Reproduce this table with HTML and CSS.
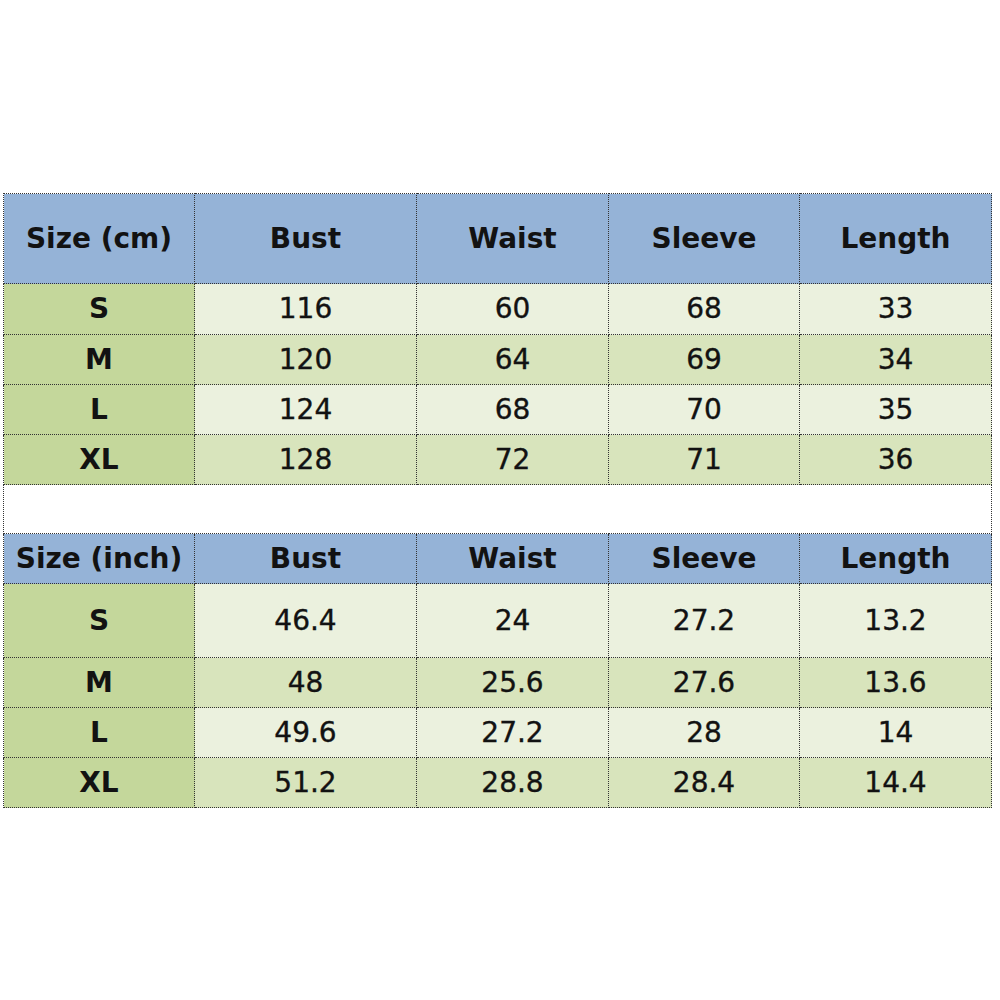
FILE: index.html
```html
<!DOCTYPE html>
<html>
<head>
<meta charset="utf-8">
<link rel="stylesheet" href="styles.css">
</head>
<body>
<div class="page">
<table class="chart">
  <colgroup>
    <col class="c1"><col class="c2"><col class="c3"><col class="c4"><col class="c5">
  </colgroup>
  <tr class="head h-tall">
    <th class="lab">Size (cm)</th><th>Bust</th><th>Waist</th><th>Sleeve</th><th>Length</th>
  </tr>
  <tr class="r51 light"><th class="size">S</th><td>116</td><td>60</td><td>68</td><td>33</td></tr>
  <tr class="r50 dark"><th class="size">M</th><td>120</td><td>64</td><td>69</td><td>34</td></tr>
  <tr class="r50 light"><th class="size">L</th><td>124</td><td>68</td><td>70</td><td>35</td></tr>
  <tr class="r50 dark"><th class="size">XL</th><td>128</td><td>72</td><td>71</td><td>36</td></tr>
  <tr class="gap"><td colspan="5"></td></tr>
  <tr class="head r50">
    <th class="lab">Size (inch)</th><th>Bust</th><th>Waist</th><th>Sleeve</th><th>Length</th>
  </tr>
  <tr class="r74 light"><th class="size">S</th><td>46.4</td><td>24</td><td>27.2</td><td>13.2</td></tr>
  <tr class="r50 dark"><th class="size">M</th><td>48</td><td>25.6</td><td>27.6</td><td>13.6</td></tr>
  <tr class="r50 light"><th class="size">L</th><td>49.6</td><td>27.2</td><td>28</td><td>14</td></tr>
  <tr class="r50 dark"><th class="size">XL</th><td>51.2</td><td>28.8</td><td>28.4</td><td>14.4</td></tr>
</table>
</div>
</body>
</html>
```
FILE: styles.css
```css
html, body {
  margin: 0;
  padding: 0;
  background: #ffffff;
}
.page {
  padding: 193px 0 0 3px;
}
.chart {
  border-collapse: collapse;
  table-layout: fixed;
  width: 988px;
  font-family: "DejaVu Sans", Verdana, sans-serif;
  font-size: 28px;
  color: #121212;
}
.c1 { width: 191px; }
.c2 { width: 222px; }
.c3 { width: 192px; }
.c4 { width: 191px; }
.c5 { width: 192px; }
.chart th, .chart td {
  border: 1px dotted #333333;
  padding: 0;
  text-align: center;
  vertical-align: middle;
  line-height: 1;
}
.chart th { font-weight: bold; }
.chart td {
  font-weight: normal;
  -webkit-text-stroke: 0.35px #121212;
}
.head th { background: #95b3d7; }
.h-tall { height: 90px; }
.r50 { height: 50px; }
.r51 { height: 51px; }
.r74 { height: 74px; }
.light td { background: #ebf1de; }
.dark td { background: #d8e4bc; }
.chart th.size { background: #c4d79b; }
.gap { height: 49px; }
.gap td { background: #ffffff; }
```
